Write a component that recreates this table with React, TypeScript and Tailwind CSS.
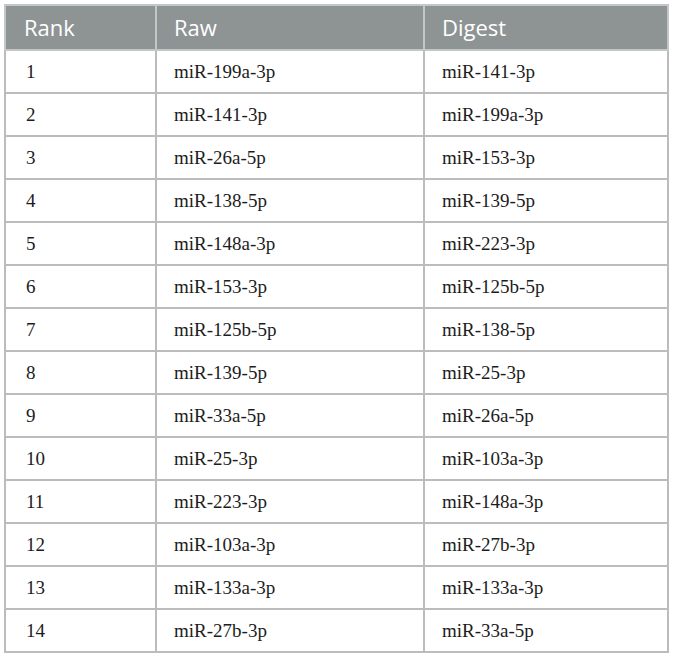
import React from 'react'

const rows: [string, string][] = [
  ['miR-199a-3p', 'miR-141-3p'],
  ['miR-141-3p', 'miR-199a-3p'],
  ['miR-26a-5p', 'miR-153-3p'],
  ['miR-138-5p', 'miR-139-5p'],
  ['miR-148a-3p', 'miR-223-3p'],
  ['miR-153-3p', 'miR-125b-5p'],
  ['miR-125b-5p', 'miR-138-5p'],
  ['miR-139-5p', 'miR-25-3p'],
  ['miR-33a-5p', 'miR-26a-5p'],
  ['miR-25-3p', 'miR-103a-3p'],
  ['miR-223-3p', 'miR-148a-3p'],
  ['miR-103a-3p', 'miR-27b-3p'],
  ['miR-133a-3p', 'miR-133a-3p'],
  ['miR-27b-3p', 'miR-33a-5p'],
]

export default function App() {
  return (
    <div className="bg-white w-[673px] h-[657px] pt-[4px] pl-[4px]">
      <table className="border-collapse w-[663px] table-fixed">
        <colgroup>
          <col className="w-[151px]" />
          <col className="w-[268px]" />
          <col className="w-[244px]" />
        </colgroup>
        <thead>
          {/* Header */}
          <tr className="h-[45px] bg-[#8e9393] text-white font-['Open_Sans',sans-serif] text-[22px]">
            <th className="border-2 border-[#c4c7c7] text-left font-normal pl-[18px]">Rank</th>
            <th className="border-2 border-[#c4c7c7] text-left font-normal pl-[17px]">Raw</th>
            <th className="border-2 border-[#c4c7c7] text-left font-normal pl-[17px]">Digest</th>
          </tr>
        </thead>
        <tbody className="font-['Liberation_Serif',serif] text-[19px] text-[#1c1c1c]">
          {rows.map(([raw, digest], i) => (
            <tr key={i} className="h-[43px]">
              <td className="border-2 border-[#bcbcbc] pl-[20px] pt-[2px]">{i + 1}</td>
              <td className="border-2 border-[#bcbcbc] pl-[17px] pt-[2px]">{raw}</td>
              <td className="border-2 border-[#bcbcbc] pl-[17px] pt-[2px]">{digest}</td>
            </tr>
          ))}
        </tbody>
      </table>
    </div>
  )
}
